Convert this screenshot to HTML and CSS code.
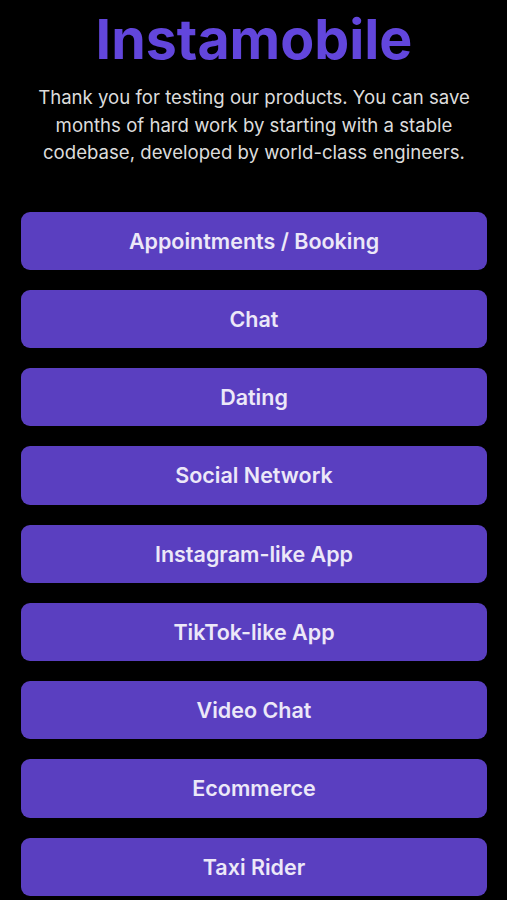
FILE: index.html
```html
<!DOCTYPE html>
<html>
<head>
<meta charset="utf-8">
<link rel="stylesheet" href="styles.css">
</head>
<body>
<main class="screen">
  <h1 class="title">Instamobile</h1>
  <p class="intro">Thank you for testing our products. You can save months of hard work by starting with a stable codebase, developed by world-class engineers.</p>
  <nav class="list">
    <a class="item">Appointments / Booking</a>
    <a class="item">Chat</a>
    <a class="item">Dating</a>
    <a class="item">Social Network</a>
    <a class="item">Instagram-like App</a>
    <a class="item">TikTok-like App</a>
    <a class="item">Video Chat</a>
    <a class="item">Ecommerce</a>
    <a class="item">Taxi Rider</a>
  </nav>
</main>
</body>
</html>
```
FILE: styles.css
```css
html, body {
  margin: 0;
  padding: 0;
  background: #000;
  height: 900px;
  overflow: hidden;
}
.screen {
  font-family: Inter, "Noto Sans", sans-serif;
  display: flex;
  flex-direction: column;
  align-items: center;
  padding: 3px 20px 0 21px;
}
.title {
  margin: 0;
  font-size: 55.5px;
  font-weight: 700;
  line-height: 72px;
  color: #6246dc;
}
.intro {
  margin: 9px 0 0;
  font-size: 18.6px;
  line-height: 27.5px;
  color: #dcdcdc;
  text-align: center;
  max-width: 466px;
}
.list {
  margin-top: 45px;
  width: 100%;
  display: flex;
  flex-direction: column;
  gap: 20px;
}
.item {
  height: 58.25px;
  border-radius: 9px;
  background: #5a3fc0;
  color: #ece8f8;
  font-size: 21.5px;
  font-weight: 600;
  display: flex;
  align-items: center;
  justify-content: center;
}
```
